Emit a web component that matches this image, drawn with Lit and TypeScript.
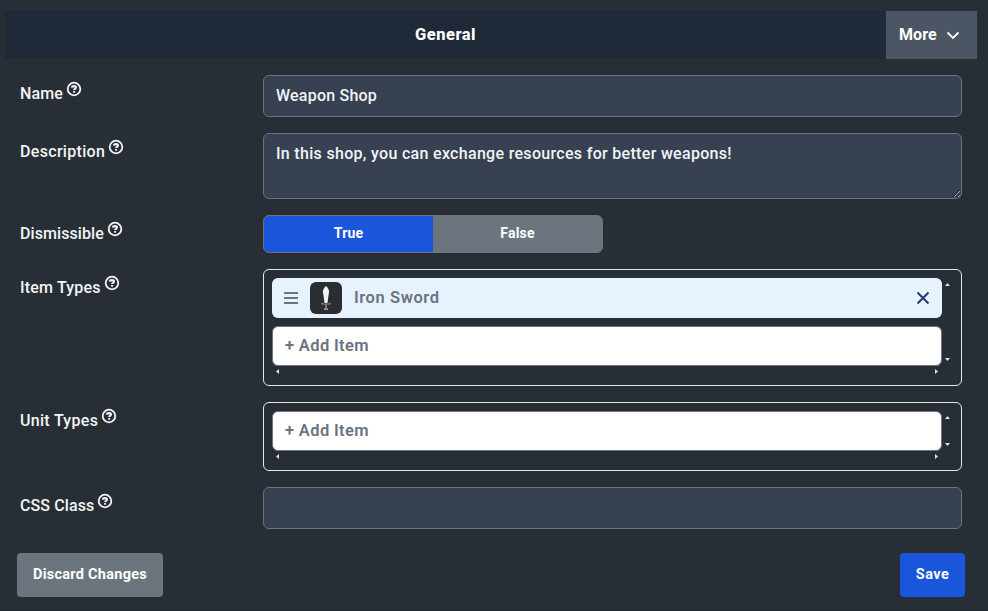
import { LitElement, html, css, svg } from "lit";
import { customElement, property } from "lit/decorators.js";

@customElement("field-row")
class FieldRow extends LitElement {
  @property() label = "";
  @property() tracking = "normal";

  static styles = css`
    :host { display: grid; grid-template-columns: 243px 699px; align-items: start; }
    .label { display: flex; align-items: flex-start; gap: 3px; padding-top: 7px; color: #f3f4f6; font-size: 16px; font-weight: 500; line-height: 24px; white-space: nowrap; }
    svg { display: block; flex: none; width: 16px; height: 16px; margin-top: -1px; }
  `;

  render() {
    return html`
      <div class="label">
        <span style="letter-spacing:${this.tracking}">${this.label}</span>
        <svg viewBox="0 0 16 16" fill="none" stroke="#f3f4f6">
          <circle cx="8" cy="8" r="6.3" stroke-width="1.8"></circle>
          <path d="M5.9 6.6C6 5.5 6.9 5.1 8 5.1c1.2 0 2 .5 2 1.500 0 1.200-1.900 1.200-1.900 2.400" stroke-width="2.1"></path>
          <path d="M7.1 10h2v1.700h-2z" fill="#f3f4f6" stroke="none"></path>
        </svg>
      </div>
      <slot></slot>
    `;
  }
}

@customElement("item-list")
class ItemList extends LitElement {
  @property({ type: Array }) items: string[] = [];

  static styles = css`
    :host { display: grid; grid-template-columns: 670px 11px; justify-content: start; box-sizing: border-box; border: 1px solid #e5e7eb; border-radius: 6px; padding: 8px; }
    .rows { display: flex; flex-direction: column; gap: 8px; }
    .row { display: flex; align-items: center; box-sizing: border-box; height: 40px; border-radius: 6px; font-size: 16.5px; line-height: 19px; font-weight: 600; color: #6b7280; }
    .item { background: #e6f3ff; padding: 0 11px 0 11px; }
    .add { background: #fff; border: 1px solid #6b7280; padding: 0 12px 2px; }
    .name { flex: 1; margin-left: 12px; padding-bottom: 2px; letter-spacing: 0.58px; }
    .addtext { letter-spacing: 0.35px; }
    .thumb { margin-left: 11px; }
    .grip { margin-top: -2px; }
    svg { display: block; flex: none; }
    .vbar { display: flex; flex-direction: column; justify-content: space-between; align-items: center; padding: 5px 0; }
    .hbar { display: flex; justify-content: space-between; align-items: center; height: 11px; padding: 0 4px; }
    .tri { fill: #e2e4e7; }
  `;

  render() {
    return html`
      <div class="rows">
        ${this.items.map((name) => html`
          <div class="row item">
            <svg class="grip" width="16" height="16" viewBox="0 0 16 16" stroke="#6b7280" stroke-width="2">
              <path d="M1 4h14M1 9h14M1 14h14"></path>
            </svg>
            <svg class="thumb" width="32" height="32" viewBox="0 0 32 32">
              <rect width="32" height="32" rx="6" fill="#2b2e31"></rect>
              <path d="M16 4C12.800 7 12.400 9.500 13.400 12.500L14.500 21h3l1.100-8.500C19.600 9.500 19.200 7 16 4Z" fill="#f1f2f2"></path>
              <path d="M12 20.800v1.200h8v-1.200" fill="none" stroke="#909294" stroke-width="1.200"></path>
              <path d="M16 22v4.500" stroke="#77797b" stroke-width="2"></path>
              <path d="M14 27.200h4" stroke="#a2a4a6" stroke-width="1.500"></path>
            </svg>
            <span class="name">${name}</span>
            <svg width="16" height="16" viewBox="0 0 16 16" fill="none" stroke="#233876" stroke-width="2">
              <path d="M2.500 2.500l11 11M13.500 2.500l-11 11"></path>
            </svg>
          </div>`)}
        <div class="row add"><span class="addtext">+ Add Item</span></div>
      </div>
      <div class="vbar">
        <svg width="5" height="3" viewBox="0 0 5 3">${svg`<path class="tri" d="M0 3L2.5 0L5 3Z"/>`}</svg>
        <svg width="5" height="3" viewBox="0 0 5 3">${svg`<path class="tri" d="M0 0L2.5 3L5 0Z"/>`}</svg>
      </div>
      <div class="hbar">
        <svg width="3" height="5" viewBox="0 0 3 5">${svg`<path class="tri" d="M3 0L0 2.5L3 5Z"/>`}</svg>
        <svg width="3" height="5" viewBox="0 0 3 5">${svg`<path class="tri" d="M0 0L3 2.5L0 5Z"/>`}</svg>
      </div>
    `;
  }
}

@customElement("app-root")
class AppRoot extends LitElement {
  static styles = css`
    :host { display: block; box-sizing: border-box; width: 988px; height: 611px; padding: 11px 11px 0 5px; background: #272e35; border-bottom: 1px solid #1d2530; overflow: hidden; font-family: Roboto, "Liberation Sans", sans-serif; }
    .tabs { display: flex; height: 48px; color: #fff; font-size: 16px; font-weight: 700; }
    .tab { flex: 1; display: flex; align-items: center; justify-content: center; background: #1f2937; padding-bottom: 1px; font-size: 16.5px; line-height: 19px; font-weight: 800; letter-spacing: 0.5px; }
    .more { display: flex; align-items: center; box-sizing: border-box; width: 91px; padding: 0 16px 1px 13px; justify-content: space-between; background: #4b5563; font-weight: 700; letter-spacing: 0.1px; }
    .form { display: flex; flex-direction: column; gap: 16px; padding: 16px 0 0 15px; }
    .control { display: block; box-sizing: border-box; width: 699px; height: 42px; margin: 0; padding: 0 12px 2px; border: 1px solid #6b7280; border-radius: 6px; background: #374151; color: #f3f4f6; font: 500 16px/24px Roboto, "Liberation Sans", sans-serif; outline: none; }
    .title { letter-spacing: 0.22px; }
    .area { height: 66px; padding: 8px 12px; letter-spacing: 0.31px; resize: vertical; overflow: hidden; }
    .toggle { display: flex; box-sizing: border-box; width: 340px; height: 38px; border: 1px solid #6b7280; border-radius: 6px; overflow: hidden; background: #6c757d; color: #fff; font-size: 14px; font-weight: 700; }
    .option { flex: 1; display: flex; align-items: center; justify-content: center; padding-bottom: 2px; letter-spacing: 0.2px; }
    .on { background: #1a56db; }
    .footer { display: flex; justify-content: space-between; padding: 24px 12px 0 12px; }
    .button { display: flex; align-items: center; justify-content: center; box-sizing: border-box; height: 44px; padding-bottom: 2px; border-radius: 4px; color: #fff; font-size: 14.5px; line-height: 17px; font-weight: 700; }
    .discard { width: 146px; background: #6c757d; letter-spacing: 0.27px; }
    .save { width: 65px; background: #1a56db; letter-spacing: 0.4px; }
  `;

  render() {
    return html`
      <div class="tabs">
        <div class="tab">General</div>
        <div class="more">
          <span>More</span>
          <svg width="16" height="16" viewBox="0 0 16 16" fill="none" stroke="#fff" stroke-width="1.800"><path d="M2.500 5.500L8 11l5.500-5.500"></path></svg>
        </div>
      </div>
      <div class="form">
        <field-row label="Name" tracking="0.1px"><input class="control title" .value=${"Weapon Shop"}></field-row>
        <field-row label="Description" tracking="0.32px"><textarea class="control area" .value=${"In this shop, you can exchange resources for better weapons!"}></textarea></field-row>
        <field-row label="Dismissible" tracking="0.08px">
          <div class="toggle"><div class="option on">True</div><div class="option">False</div></div>
        </field-row>
        <field-row label="Item Types" tracking="0.2px"><item-list .items=${["Iron Sword"]}></item-list></field-row>
        <field-row label="Unit Types" tracking="0.3px"><item-list></item-list></field-row>
        <field-row label="CSS Class" tracking="0.1px"><input class="control"></field-row>
      </div>
      <div class="footer">
        <div class="button discard">Discard Changes</div>
        <div class="button save">Save</div>
      </div>
    `;
  }
}
